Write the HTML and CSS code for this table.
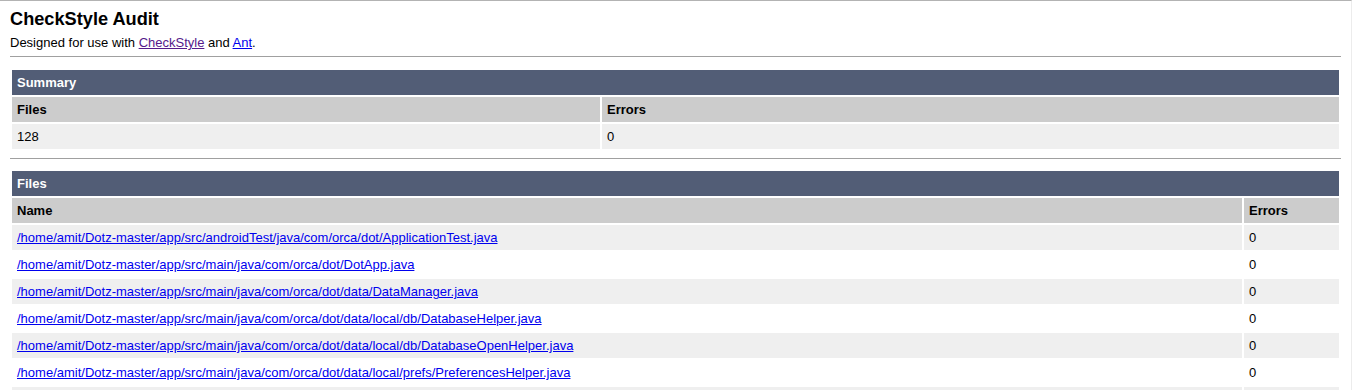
FILE: index.html
```
<!DOCTYPE html>
<html>
<head>
<meta charset="utf-8">
<title>CheckStyle Audit</title>
<link rel="stylesheet" href="styles.css">
</head>
<body>
<header class="banner">
  <h2 class="title">CheckStyle Audit</h2>
  <div class="subtitle">Designed for use with <a class="visited" href="#">CheckStyle</a> and <a href="#">Ant</a>.</div>
</header>
<hr class="rule">
<h3 class="section">Summary</h3>
<table class="log summary">
  <colgroup><col class="c-files"><col></colgroup>
  <tr><th>Files</th><th>Errors</th></tr>
  <tr class="a"><td>128</td><td>0</td></tr>
</table>
<hr class="rule">
<h3 class="section">Files</h3>
<table class="log files">
  <colgroup><col class="c-name"><col></colgroup>
  <tr><th>Name</th><th>Errors</th></tr>
  <tr class="a"><td><a href="#">/home/amit/Dotz-master/app/src/androidTest/java/com/orca/dot/ApplicationTest.java</a></td><td>0</td></tr>
  <tr class="b"><td><a href="#">/home/amit/Dotz-master/app/src/main/java/com/orca/dot/DotApp.java</a></td><td>0</td></tr>
  <tr class="a"><td><a href="#">/home/amit/Dotz-master/app/src/main/java/com/orca/dot/data/DataManager.java</a></td><td>0</td></tr>
  <tr class="b"><td><a href="#">/home/amit/Dotz-master/app/src/main/java/com/orca/dot/data/local/db/DatabaseHelper.java</a></td><td>0</td></tr>
  <tr class="a"><td><a href="#">/home/amit/Dotz-master/app/src/main/java/com/orca/dot/data/local/db/DatabaseOpenHelper.java</a></td><td>0</td></tr>
  <tr class="b"><td><a href="#">/home/amit/Dotz-master/app/src/main/java/com/orca/dot/data/local/prefs/PreferencesHelper.java</a></td><td>0</td></tr>
  <tr class="a"><td><a href="#">/home/amit/Dotz-master/app/src/main/java/com/orca/dot/data/model/Dot.java</a></td><td>0</td></tr>
</table>
</body>
</html>
```

FILE: styles.css
```
html {
  border-top: 1px solid #b3b3b3;
  border-right: 1px solid #ececec;
  background: #fff;
}

body {
  margin: 8px 10px 0 10px;
  font-family: "Liberation Sans", Arial, Helvetica, sans-serif;
  font-size: 13px;
  color: #000;
  background: #fff;
}

a {
  color: #0000ee;
  text-decoration: underline;
}

a.visited {
  color: #551a8b;
}

.title {
  margin: 0 0 5px 0;
  font-size: 18.2px;
  line-height: 21px;
  font-weight: bold;
}

.subtitle {
  line-height: 15px;
}

.rule {
  margin: 6.4px 0;
  height: 0;
  border: none;
  border-top: 1px solid #a0a0a0;
}

.section {
  margin: 12.8px 2px 0 2px;
  padding: 5px;
  font-size: 13px;
  line-height: 15px;
  font-weight: bold;
  background: #525d76;
  color: #fff;
}

.log {
  width: 100%;
  table-layout: fixed;
  border-collapse: separate;
  border-spacing: 2px;
  font-size: 13px;
}

.log th,
.log td {
  padding: 5px;
  line-height: 15px;
  text-align: left;
  vertical-align: top;
  border: none;
  white-space: nowrap;
  overflow: hidden;
}

.log th {
  font-weight: bold;
  background: #cccccc;
  color: #000;
}

.log tr.a td {
  background: #efefef;
}

.log tr.b td {
  background: #ffffff;
}

.c-files {
  width: 588px;
}

.c-name {
  width: 1230px;
}
```
